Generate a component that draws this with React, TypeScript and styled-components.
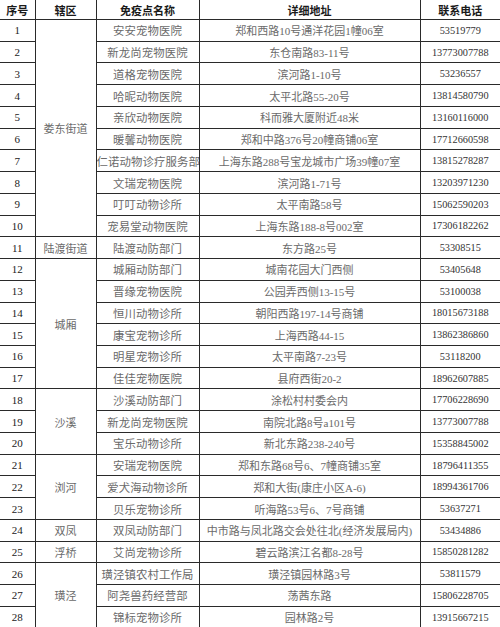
import React, { FC } from 'react';
import styled, { createGlobalStyle } from 'styled-components';

const GlobalStyle = createGlobalStyle`
  html, body {
    margin: 0;
    padding: 0;
    background: #ffffff;
    overflow: hidden;
  }
  body {
    font-family: "Liberation Serif", "Noto Sans CJK SC", serif;
  }
`;

const Table = styled.table`
  width: 500px;
  border-collapse: collapse;
  table-layout: fixed;
`;

const Col = styled.col<{ $w: number }>`
  width: ${p => p.$w}px;
`;

const HeadCell = styled.th`
  height: 19px;
  padding: 0;
  border: 1px solid #2a2a2a;
  border-top: none;
  font-size: 11px;
  font-weight: 700;
  color: #1a1a1a;
  text-align: center;
  vertical-align: middle;
  white-space: nowrap;
  &:first-child { border-left: none; }
  &:last-child { border-right: none; }
`;

const Row = styled.tr`
  height: 21.74px;
`;

const Cell = styled.td<{ $kind?: 'num' | 'text' | 'phone' }>`
  padding: 0;
  border: 1px solid #2a2a2a;
  text-align: center;
  vertical-align: middle;
  white-space: nowrap;
  overflow: hidden;
  font-size: ${p => (p.$kind === 'phone' ? '10.3px' : '11px')};
  color: ${p => (p.$kind === 'num' ? '#222' : p.$kind === 'phone' ? '#333' : '#6a6a6a')};
  &:first-child { border-left: none; }
  &:last-child { border-right: none; }
`;

const NameCell = styled(Cell)`
  font-size: 11.4px;
  letter-spacing: 0.1px;
`;

type Item = { name: string; addr: string; tel: string };
type Group = { area: string; items: Item[] };

const groups: Group[] = [
  {
    area: '娄东街道',
    items: [
      { name: '安安宠物医院', addr: '郑和西路10号通洋花园1幢06室', tel: '53519779' },
      { name: '新龙尚宠物医院', addr: '东仓南路83-11号', tel: '13773007788' },
      { name: '道格宠物医院', addr: '滨河路1-10号', tel: '53236557' },
      { name: '哈昵动物医院', addr: '太平北路55-20号', tel: '13814580790' },
      { name: '亲欣动物医院', addr: '科而雅大厦附近48米', tel: '13160116000' },
      { name: '暖馨动物医院', addr: '郑和中路376号20幢商铺06室', tel: '17712660598' },
      { name: '仁诺动物诊疗服务部', addr: '上海东路288号宝龙城市广场39幢07室', tel: '13815278287' },
      { name: '文瑞宠物医院', addr: '滨河路1-71号', tel: '13203971230' },
      { name: '叮叮动物诊所', addr: '太平南路58号', tel: '15062590203' },
      { name: '宠易堂动物医院', addr: '上海东路188-8号002室', tel: '17306182262' },
    ],
  },
  { area: '陆渡街道', items: [{ name: '陆渡动防部门', addr: '东方路25号', tel: '53308515' }] },
  {
    area: '城厢',
    items: [
      { name: '城厢动防部门', addr: '城南花园大门西侧', tel: '53405648' },
      { name: '晋缘宠物医院', addr: '公园弄西侧13-15号', tel: '53100038' },
      { name: '恒川动物诊所', addr: '朝阳西路197-14号商铺', tel: '18015673188' },
      { name: '康宝宠物诊所', addr: '上海西路44-15', tel: '13862386860' },
      { name: '明星宠物诊所', addr: '太平南路7-23号', tel: '53118200' },
      { name: '佳佳宠物医院', addr: '县府西街20-2', tel: '18962607885' },
    ],
  },
  {
    area: '沙溪',
    items: [
      { name: '沙溪动防部门', addr: '涂松村村委会内', tel: '17706228690' },
      { name: '新龙尚宠物医院', addr: '南院北路8号a101号', tel: '13773007788' },
      { name: '宝乐动物诊所', addr: '新北东路238-240号', tel: '15358845002' },
    ],
  },
  {
    area: '浏河',
    items: [
      { name: '安瑞宠物医院', addr: '郑和东路68号6、7幢商铺35室', tel: '18796411355' },
      { name: '爱犬海动物诊所', addr: '郑和大街(康庄小区A-6)', tel: '18994361706' },
      { name: '贝乐宠物诊所', addr: '听海路53号6、7号商铺', tel: '53637271' },
    ],
  },
  { area: '双凤', items: [{ name: '双凤动防部门', addr: '中市路与凤北路交会处往北(经济发展局内)', tel: '53434886' }] },
  { area: '浮桥', items: [{ name: '艾尚宠物诊所', addr: '碧云路滨江名都8-28号', tel: '15850281282' }] },
  {
    area: '璜泾',
    items: [
      { name: '璜泾镇农村工作局', addr: '璜泾镇园林路3号', tel: '53811579' },
      { name: '阿尧兽药经营部', addr: '荡茜东路', tel: '15806228705' },
      { name: '锦标宠物诊所', addr: '园林路2号', tel: '13915667215' },
    ],
  },
];

const App: FC = () => {
  let n = 0;
  return (
    <>
      <GlobalStyle />
      <Table>
        <colgroup>
          <Col $w={35} />
          <Col $w={61} />
          <Col $w={103} />
          <Col $w={221} />
          <Col $w={80} />
        </colgroup>
        <thead>
          <tr>
            <HeadCell>序号</HeadCell>
            <HeadCell>辖区</HeadCell>
            <HeadCell>免疫点名称</HeadCell>
            <HeadCell>详细地址</HeadCell>
            <HeadCell>联系电话</HeadCell>
          </tr>
        </thead>
        <tbody>
          {groups.map(g =>
            g.items.map((it, i) => {
              n += 1;
              return (
                <Row key={n}>
                  <Cell $kind="num">{n}</Cell>
                  {i === 0 && <Cell rowSpan={g.items.length}>{g.area}</Cell>}
                  <NameCell>{it.name}</NameCell>
                  <Cell>{it.addr}</Cell>
                  <Cell $kind="phone">{it.tel}</Cell>
                </Row>
              );
            })
          )}
        </tbody>
      </Table>
    </>
  );
};

export default App;
